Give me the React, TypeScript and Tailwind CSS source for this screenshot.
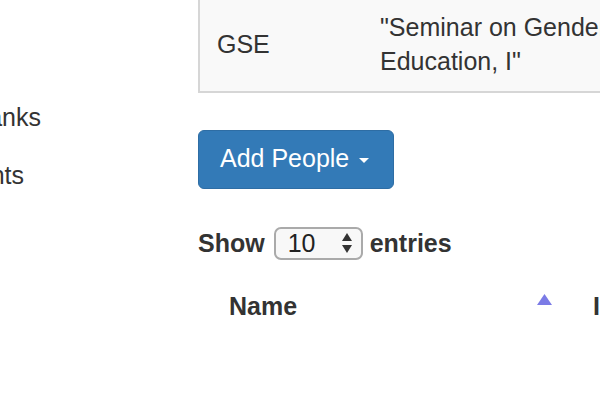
import React from "react";

export default function App() {
  return (
    <div
      className="w-[600px] h-[420px] overflow-hidden bg-white text-[#333] flex"
      style={{ fontFamily: '"Liberation Sans", Arial, sans-serif' }}
    >
      {/* sidebar */}
      <div className="w-[198px] shrink-0 flex flex-col pt-[100px]">
        <div className="w-[41px] flex justify-end overflow-hidden whitespace-nowrap text-[25px] leading-[34px]">
          Question Banks
        </div>
        <div className="w-[24px] flex justify-end overflow-hidden whitespace-nowrap text-[25px] leading-[34px] mt-[24px]">
          Students
        </div>
      </div>

      {/* main */}
      <div className="flex-1 min-w-0 flex flex-col">
        <div className="w-[560px] border-l-2 border-b-2 border-[#d6d6d6] bg-[#f9f9f9] flex items-center text-[25px] leading-[34px]">
          <div className="w-[164px] pl-[17px] -mt-[3px]">GSE</div>
          <div className="flex-1 pl-[16px] pt-[10px] pb-[13px] whitespace-nowrap">
            <div>"Seminar on Gender in</div>
            <div>Education, I"</div>
          </div>
        </div>

        <div className="mt-[37px]">
          <button className="h-[59px] w-[196px] rounded-[6px] bg-[#337ab7] border border-[#2e6da4] text-white text-[25px] flex items-center pl-[21px]">
            <span className="-mt-[1px]">Add People</span>
            <span className="ml-[10px] w-0 h-0 border-l-[5px] border-r-[5px] border-t-[5px] border-l-transparent border-r-transparent border-t-white mt-[2px]"></span>
          </button>
        </div>

        <div className="mt-[37px] flex items-center font-bold text-[25px] leading-[34px]">
          <span>Show</span>
          <div className="ml-[9px] w-[89px] h-[33px] rounded-[7px] border-2 border-[#aaa] bg-[#f8f8f8] flex items-center justify-between pl-[12px] pr-[8px] font-normal">
            <span className="text-[#222]">10</span>
            <svg width="12" height="22" viewBox="0 0 12 22">
              <polygon points="6,1 11,9 1,9" fill="#333" />
              <polygon points="1,13 11,13 6,21" fill="#333" />
            </svg>
          </div>
          <span className="ml-[7px]">entries</span>
        </div>

        <div className="mt-[29px] flex items-center font-bold text-[25px] leading-[34px] whitespace-nowrap">
          <div className="w-[395px] shrink-0 pl-[31px] relative">
            Name
            <svg className="absolute left-[339px] top-[5px]" width="15" height="12" viewBox="0 0 15 12">
              <polygon points="7.5,0 15,11 0,11" fill="#7b7be6" />
            </svg>
          </div>
          <div className="shrink-0">ID</div>
        </div>
      </div>
    </div>
  );
}
